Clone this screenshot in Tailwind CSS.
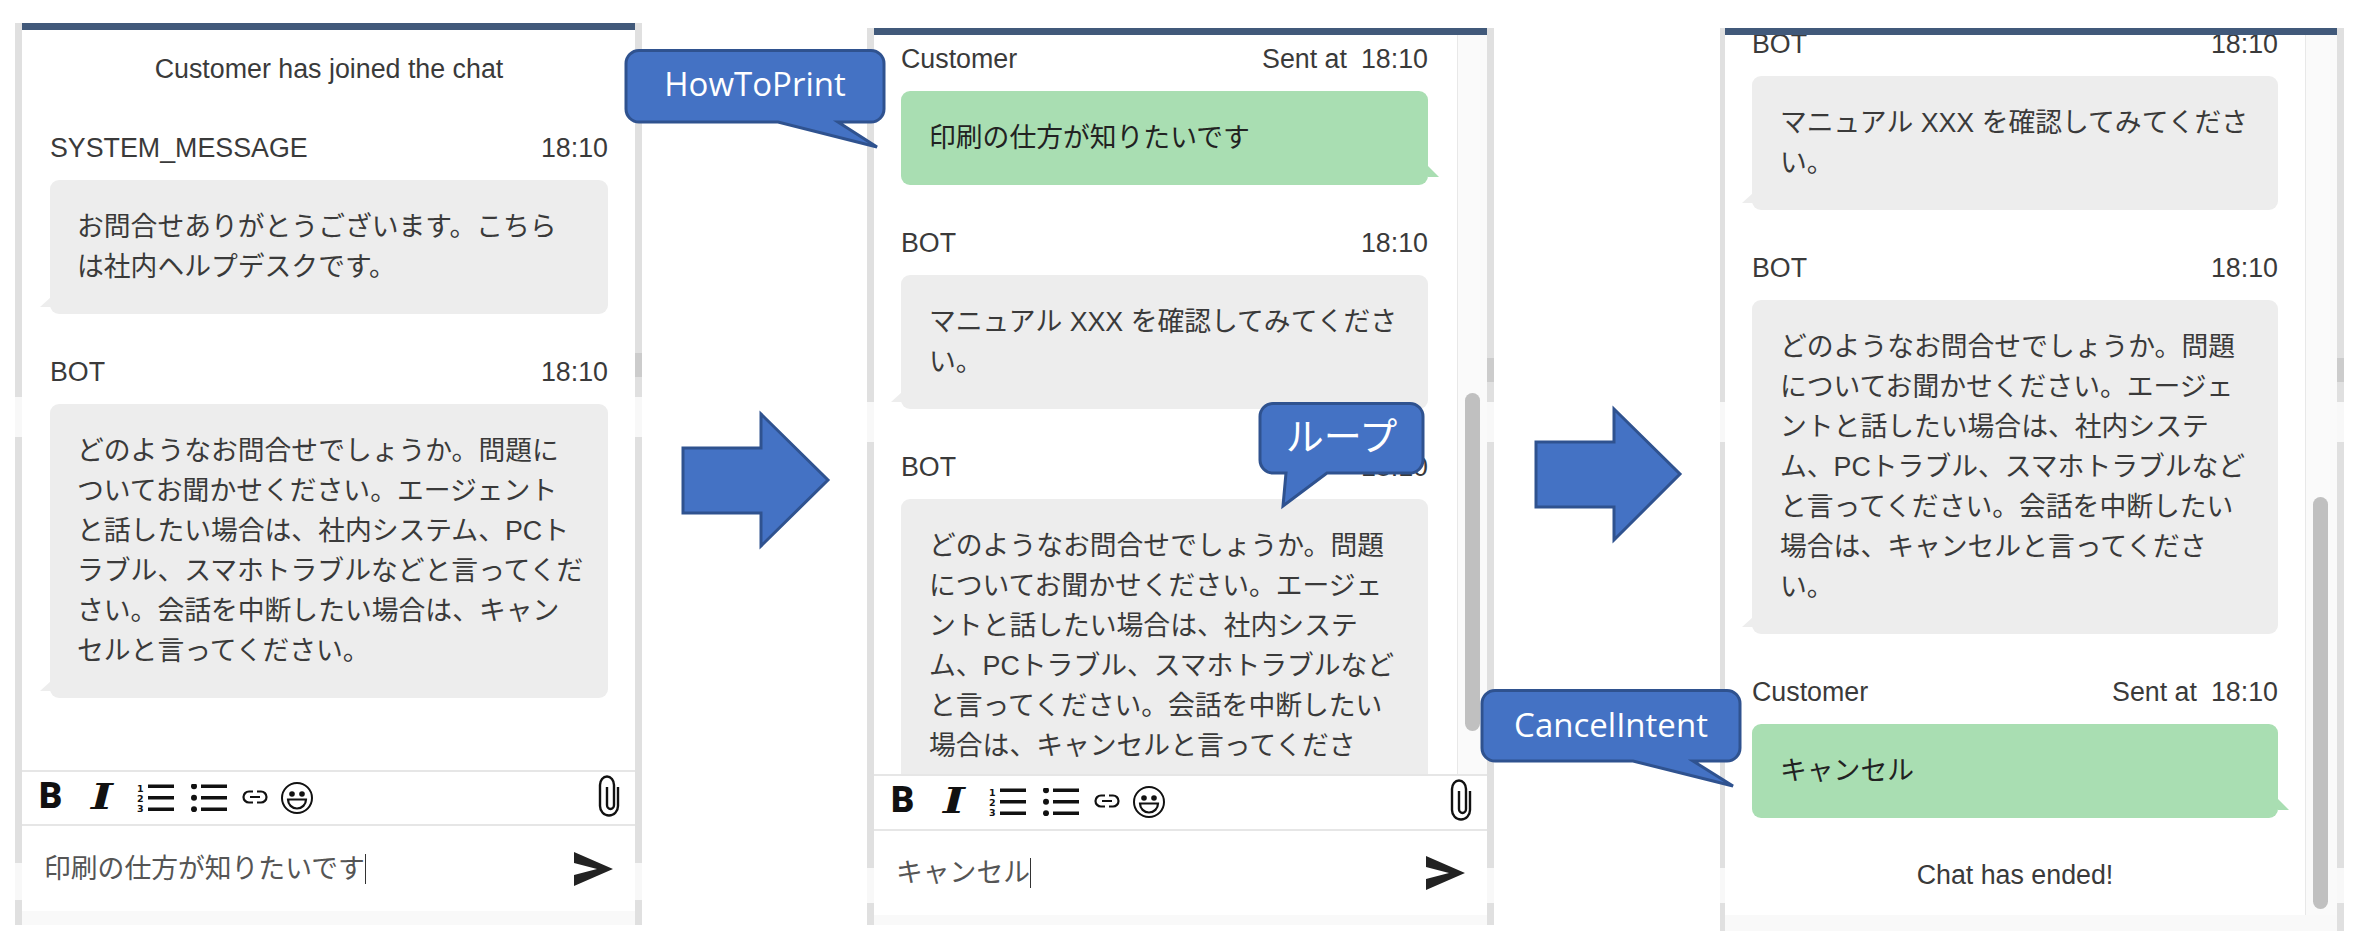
<!DOCTYPE html>
<html lang="ja">
<head>
<meta charset="utf-8">
<title>Chat flow</title>
<script src="https://cdn.jsdelivr.net/npm/@tailwindcss/browser@4"></script>
</head>
<body class="bg-white">
<svg class="hidden">
    <symbol id="ol" viewBox="0 0 38 28">
        <text x="0" y="8" font-size="9.5" font-weight="700" font-family="DejaVu Sans" fill="#111">1</text>
        <text x="0" y="18" font-size="9.5" font-weight="700" font-family="DejaVu Sans" fill="#111">2</text>
        <text x="0" y="28" font-size="9.5" font-weight="700" font-family="DejaVu Sans" fill="#111">3</text>
        <rect x="11" y="0.5" width="26" height="3.5" fill="#111"/>
        <rect x="11" y="12" width="26" height="3.5" fill="#111"/>
        <rect x="11" y="23.5" width="26" height="3.5" fill="#111"/>
    </symbol>
    <symbol id="ul" viewBox="0 0 38 28">
        <circle cx="4" cy="2.2" r="3" fill="#111"/>
        <circle cx="4" cy="13.8" r="3" fill="#111"/>
        <circle cx="4" cy="25.2" r="3" fill="#111"/>
        <rect x="11" y="0.5" width="26" height="3.5" fill="#111"/>
        <rect x="11" y="12" width="26" height="3.5" fill="#111"/>
        <rect x="11" y="23.5" width="26" height="3.5" fill="#111"/>
    </symbol>
    <symbol id="link" viewBox="0 0 26 14">
        <path d="M11 1.5H7a5.5 5.5 0 0 0 0 11h4M15 1.5h4a5.5 5.5 0 0 1 0 11h-4M8 7h10" fill="none" stroke="#111" stroke-width="2.2"/>
    </symbol>
    <symbol id="smile" viewBox="0 0 32 32">
        <circle cx="16" cy="16" r="15" fill="none" stroke="#111" stroke-width="2"/>
        <circle cx="11" cy="12" r="2.8" fill="#111"/>
        <circle cx="21" cy="12" r="2.8" fill="#111"/>
        <path d="M7 17.5h18a9 9 0 0 1-18 0z" fill="#fff" stroke="#111" stroke-width="2.2"/>
    </symbol>
    <symbol id="clip" viewBox="0 0 22 42">
        <path d="M20 12V31a9 9.5 0 0 1-18 0V10a7 8.5 0 0 1 14 0V30a3.5 4 0 0 1-7 0V12" fill="none" stroke="#111" stroke-width="2.4"/>
    </symbol>
    <symbol id="send" viewBox="0 0 39 34">
        <path d="M0 0L39 17L0 34V23L23 17L0 11Z" fill="#222"/>
    </symbol>
</svg>

<div class="relative w-[2358px] h-[950px] overflow-hidden flex items-start text-[#3a3a3a] text-[26.8px] font-['Liberation_Sans','Noto_Sans_CJK_JP',sans-serif]">

    <!-- first chat -->
    <div class="relative ml-[15px] mt-[23px] w-[627px] h-[902px] flex flex-col border-x-[7px] border-[#e0e0e0]">
        <div class="absolute -left-[7px] top-[374px] w-[7px] h-[40px] bg-[#f8f8f8]"></div>
        <div class="absolute -right-[7px] top-[374px] w-[7px] h-[40px] bg-[#f8f8f8]"></div>
        <div class="absolute -right-[7px] top-[330px] w-[7px] h-[24px] bg-[#cccccc]"></div>
        <div class="absolute -left-[7px] top-[840px] w-[7px] h-[37px] bg-[#f8f8f8]"></div>
        <div class="absolute -right-[7px] top-[840px] w-[7px] h-[37px] bg-[#f8f8f8]"></div>
        <div class="h-[7px] bg-[#41597a]"></div>
        <div class="h-[740px] overflow-hidden pl-[28px] pr-[27px] pt-[22px]">
            <div class="h-[34px] leading-[34px] text-center">Customer has joined the chat</div>
            <div class="mt-[45px]">
                <div class="flex justify-between h-[34px] leading-[34px] mb-[15px]"><span>SYSTEM_MESSAGE</span><span>18:10</span></div>
                <div class="relative bg-[#ededed] rounded-[9px] px-[27px] py-[27px] leading-[40px] whitespace-nowrap">
                    お問合せありがとうございます。こちら<br>は社内ヘルプデスクです。
                    <div class="absolute -left-[10px] bottom-[7px] w-[11px] h-[10px] bg-[#ededed] [clip-path:polygon(100%_0,100%_100%,0_100%)]"></div>
                </div>
            </div>
            <div class="mt-[41px]">
                <div class="flex justify-between h-[34px] leading-[34px] mb-[15px]"><span>BOT</span><span>18:10</span></div>
                <div class="relative bg-[#ededed] rounded-[9px] px-[27px] py-[27px] leading-[40px] whitespace-nowrap">
                    どのようなお問合せでしょうか。問題に<br>ついてお聞かせください。エージェント<br>と話したい場合は、社内システム、PCト<br>ラブル、スマホトラブルなどと言ってくだ<br>さい。会話を中断したい場合は、キャン<br>セルと言ってください。
                    <div class="absolute -left-[10px] bottom-[7px] w-[11px] h-[10px] bg-[#ededed] [clip-path:polygon(100%_0,100%_100%,0_100%)]"></div>
                </div>
            </div>
        </div>
        <div class="flex items-start h-[56px] border-y-2 border-[#e6e6e6] pl-[17px] pr-[15px] text-[#111]">
            <span class="w-[52px] h-[26px] mt-[11px] leading-[26px] text-[36px] font-black font-['Roboto']">B</span>
            <span class="w-[46px] h-[26px] mt-[11px] leading-[26px] text-[36px] font-bold italic font-['DejaVu_Serif'] origin-left scale-x-[1.3]">I</span>
            <svg class="w-[38px] h-[28px] mt-[12px]"><use href="#ol"/></svg>
            <svg class="w-[38px] h-[28px] mt-[12px] ml-[15px]"><use href="#ul"/></svg>
            <svg class="w-[26px] h-[14px] mt-[18px] ml-[14px]"><use href="#link"/></svg>
            <svg class="w-[32px] h-[32px] mt-[10px] ml-[13px]"><use href="#smile"/></svg>
            <svg class="w-[22px] h-[42px] mt-[3px] ml-auto"><use href="#clip"/></svg>
        </div>
        <div class="flex items-center h-[85px] pl-[22px] pr-[22px] text-[#555]">
            <span class="border-r border-[#333] h-[30px] leading-[30px]">印刷の仕方が知りたいです</span>
            <svg class="w-[39px] h-[34px] ml-auto"><use href="#send"/></svg>
        </div>
        <div class="flex-1 bg-[#f9f9f9]"></div>
    </div>

    <!-- second chat -->
    <div class="relative ml-[225px] mt-[28px] w-[627px] h-[897px] flex flex-col border-x-[7px] border-[#e0e0e0]">
        <div class="absolute -left-[7px] top-[374px] w-[7px] h-[40px] bg-[#f8f8f8]"></div>
        <div class="absolute -right-[7px] top-[374px] w-[7px] h-[40px] bg-[#f8f8f8]"></div>
        <div class="absolute -right-[7px] top-[330px] w-[7px] h-[24px] bg-[#cccccc]"></div>
        <div class="absolute -left-[7px] top-[840px] w-[7px] h-[35px] bg-[#f8f8f8]"></div>
        <div class="absolute -right-[7px] top-[840px] w-[7px] h-[35px] bg-[#f8f8f8]"></div>
        <div class="h-[7px] bg-[#41597a]"></div>
        <div class="flex h-[739px] overflow-hidden">
            <div class="flex-1 pl-[27px] pr-[29px] pt-[7px]">
                <div class="flex justify-between h-[34px] leading-[34px] mb-[15px]"><span>Customer</span><span><span class="mr-[14px]">Sent at</span>18:10</span></div>
                <div class="relative bg-[#a9deb2] rounded-[9px] px-[28px] py-[27px] leading-[40px] text-[#222] whitespace-nowrap">
                    印刷の仕方が知りたいです
                    <div class="absolute -right-[11px] bottom-[8px] w-[11px] h-[11px] bg-[#a9deb2] [clip-path:polygon(0_0,100%_100%,0_100%)]"></div>
                </div>
                <div class="mt-[41px]">
                    <div class="flex justify-between h-[34px] leading-[34px] mb-[15px]"><span>BOT</span><span>18:10</span></div>
                    <div class="relative bg-[#ededed] rounded-[9px] px-[28px] py-[27px] leading-[40px] whitespace-nowrap">
                        マニュアル XXX を確認してみてくださ<br>い。
                        <div class="absolute -left-[10px] bottom-[7px] w-[11px] h-[10px] bg-[#ededed] [clip-path:polygon(100%_0,100%_100%,0_100%)]"></div>
                    </div>
                </div>
                <div class="mt-[41px]">
                    <div class="flex justify-between h-[34px] leading-[34px] mb-[15px]"><span>BOT</span><span>18:10</span></div>
                    <div class="relative bg-[#ededed] rounded-[9px] px-[28px] py-[27px] leading-[40px] whitespace-nowrap">
                        どのようなお問合せでしょうか。問題<br>についてお聞かせください。エージェ<br>ントと話したい場合は、社内システ<br>ム、PCトラブル、スマホトラブルなど<br>と言ってください。会話を中断したい<br>場合は、キャンセルと言ってくださ<br>い。
                    </div>
                </div>
            </div>
            <div class="relative w-[30px] bg-[#fafafa] border-l border-[#e8e8e8]">
                <div class="absolute left-[7px] top-[358px] w-[15px] h-[338px] rounded-full bg-[#c0c0c0]"></div>
            </div>
        </div>
        <div class="flex items-start h-[57px] border-y-2 border-[#e6e6e6] pl-[17px] pr-[15px] text-[#111]">
            <span class="w-[52px] h-[26px] mt-[11px] leading-[26px] text-[36px] font-black font-['Roboto']">B</span>
            <span class="w-[46px] h-[26px] mt-[11px] leading-[26px] text-[36px] font-bold italic font-['DejaVu_Serif'] origin-left scale-x-[1.3]">I</span>
            <svg class="w-[38px] h-[28px] mt-[12px]"><use href="#ol"/></svg>
            <svg class="w-[38px] h-[28px] mt-[12px] ml-[15px]"><use href="#ul"/></svg>
            <svg class="w-[26px] h-[14px] mt-[18px] ml-[14px]"><use href="#link"/></svg>
            <svg class="w-[32px] h-[32px] mt-[10px] ml-[13px]"><use href="#smile"/></svg>
            <svg class="w-[22px] h-[42px] mt-[3px] ml-auto"><use href="#clip"/></svg>
        </div>
        <div class="flex items-center h-[84px] pl-[22px] pr-[22px] text-[#555]">
            <span class="border-r border-[#333] h-[30px] leading-[30px]">キャンセル</span>
            <svg class="w-[39px] h-[34px] ml-auto"><use href="#send"/></svg>
        </div>
        <div class="flex-1 bg-[#f9f9f9]"></div>
    </div>

    <!-- third chat -->
    <div class="relative ml-[226px] mt-[28px] w-[624px] h-[903px] flex flex-col border-l-[5px] border-r-[7px] border-[#e0e0e0]">
        <div class="absolute -left-[5px] top-[374px] w-[5px] h-[40px] bg-[#f8f8f8]"></div>
        <div class="absolute -right-[7px] top-[374px] w-[7px] h-[40px] bg-[#f8f8f8]"></div>
        <div class="absolute -right-[7px] top-[330px] w-[7px] h-[24px] bg-[#cccccc]"></div>
        <div class="absolute -left-[5px] top-[840px] w-[5px] h-[35px] bg-[#f8f8f8]"></div>
        <div class="absolute -right-[7px] top-[840px] w-[7px] h-[35px] bg-[#f8f8f8]"></div>
        <div class="h-[7px] bg-[#41597a]"></div>
        <div class="flex h-[880px] overflow-hidden">
            <div class="flex-1 pl-[27px] pr-[27px] -mt-[8px]">
                <div class="flex justify-between h-[34px] leading-[34px] mb-[15px]"><span>BOT</span><span>18:10</span></div>
                <div class="relative bg-[#ededed] rounded-[9px] px-[28px] py-[27px] leading-[40px] whitespace-nowrap">
                    マニュアル XXX を確認してみてくださ<br>い。
                    <div class="absolute -left-[10px] bottom-[7px] w-[11px] h-[10px] bg-[#ededed] [clip-path:polygon(100%_0,100%_100%,0_100%)]"></div>
                </div>
                <div class="mt-[41px]">
                    <div class="flex justify-between h-[34px] leading-[34px] mb-[15px]"><span>BOT</span><span>18:10</span></div>
                    <div class="relative bg-[#ededed] rounded-[9px] px-[28px] py-[27px] leading-[40px] whitespace-nowrap">
                        どのようなお問合せでしょうか。問題<br>についてお聞かせください。エージェ<br>ントと話したい場合は、社内システ<br>ム、PCトラブル、スマホトラブルなど<br>と言ってください。会話を中断したい<br>場合は、キャンセルと言ってくださ<br>い。
                        <div class="absolute -left-[10px] bottom-[7px] w-[11px] h-[10px] bg-[#ededed] [clip-path:polygon(100%_0,100%_100%,0_100%)]"></div>
                    </div>
                </div>
                <div class="mt-[41px]">
                    <div class="flex justify-between h-[34px] leading-[34px] mb-[15px]"><span>Customer</span><span><span class="mr-[14px]">Sent at</span>18:10</span></div>
                    <div class="relative bg-[#a9deb2] rounded-[9px] px-[28px] py-[27px] leading-[40px] text-[#222] whitespace-nowrap">
                        キャンセル
                        <div class="absolute -right-[11px] bottom-[8px] w-[11px] h-[11px] bg-[#a9deb2] [clip-path:polygon(0_0,100%_100%,0_100%)]"></div>
                    </div>
                </div>
                <div class="mt-[40px] h-[34px] leading-[34px] text-center">Chat has ended!</div>
            </div>
            <div class="relative w-[32px] bg-[#fafafa] border-l border-[#e8e8e8]">
                <div class="absolute left-[7px] top-[462px] w-[15px] h-[412px] rounded-full bg-[#c0c0c0]"></div>
            </div>
        </div>
        <div class="flex-1 bg-[#f9f9f9]"></div>
    </div>

    <!-- annotations over the screenshots -->
    <svg class="absolute inset-0 w-[2358px] h-[950px]" viewBox="0 0 2358 950">
        <g fill="#4472c4" stroke="#2f528f" stroke-width="3">
            <path d="M683 448H761V414L828 480L761 546V513H683Z"/>
            <path d="M1536 442H1614V409L1680 474L1614 540V507H1536Z"/>
            <path d="M639 50.5H871a13 13 0 0 1 13 13V109a13 13 0 0 1-13 13H838L877 147L778 122H639a13 13 0 0 1-13-13V63.5a13 13 0 0 1 13-13Z"/>
            <path d="M1273 403.5H1410a13 13 0 0 1 13 13V460a13 13 0 0 1-13 13H1327L1283 506L1286 473H1273a13 13 0 0 1-13-13V416.5a13 13 0 0 1 13-13Z"/>
            <path d="M1495 690.5H1727a13 13 0 0 1 13 13V748a13 13 0 0 1-13 13H1693L1733 786L1633 761H1495a13 13 0 0 1-13-13V703.5a13 13 0 0 1 13-13Z"/>
        </g>
    </svg>
    <div class="absolute left-[626px] top-[48px] w-[258px] h-[72px] flex items-center justify-center text-white text-[33px] font-['Open_Sans']">HowToPrint</div>
    <div class="absolute left-[1260px] top-[403px] w-[163px] h-[60px] flex items-center justify-center text-white text-[38px] font-['Noto_Sans_CJK_JP']">ループ</div>
    <div class="absolute left-[1482px] top-[689px] w-[258px] h-[71px] flex items-center justify-center text-white text-[33px] font-['Open_Sans']">CancelIntent</div>
</div>
</body>
</html>
